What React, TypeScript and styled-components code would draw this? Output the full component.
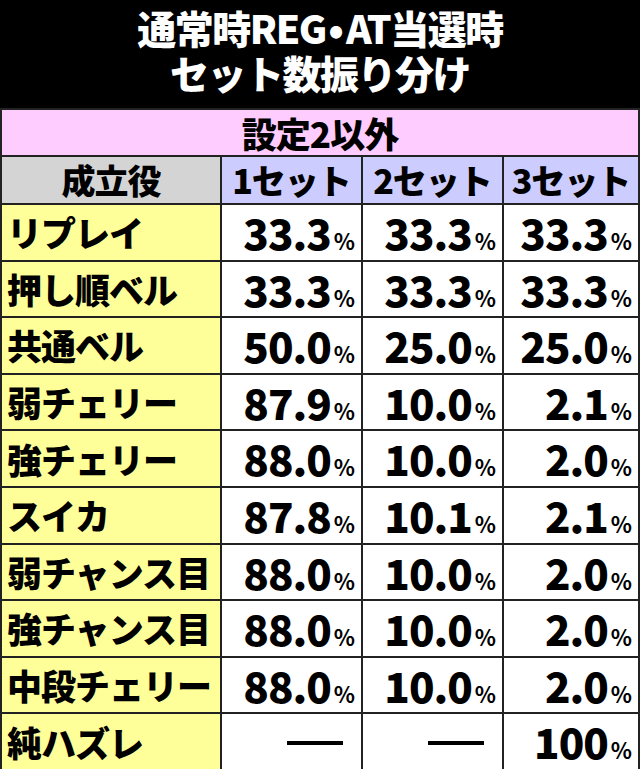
import React from "react";
import styled, { createGlobalStyle } from "styled-components";

const Global = createGlobalStyle`
  html, body { margin: 0; padding: 0; background: #000; }
  body { font-family: "Noto Sans CJK JP", "Noto Sans", sans-serif; }
`;

const Page = styled.div`
  width: 640px;
  height: 769px;
  display: flex;
  flex-direction: column;
  background: #000;
  overflow: hidden;
`;

const Title = styled.div`
  height: 108px;
  display: flex;
  flex-direction: column;
  align-items: center;
  justify-content: center;
  color: #fff;
  font-weight: 900;
  font-size: 39px;
  line-height: 45px;
  letter-spacing: -1.5px;
  padding-bottom: 8px;
  box-sizing: border-box;
`;

const Dot = styled.span`
  display: inline-block;
  width: 20px;
  text-align: center;
  letter-spacing: 0;
`;

const Grid = styled.div`
  flex: 1;
  display: grid;
  grid-template-columns: 218px 139px 139px 1fr;
  grid-template-rows: 45px 46px repeat(10, 1fr);
  gap: 2px;
  background: #222;
  border: 2px solid #222;
  border-bottom: none;
  box-sizing: border-box;
`;

const Cell = styled.div<{ $bg: string; $align?: "left" | "center" | "right" }>`
  background: ${(p) => p.$bg};
  display: flex;
  align-items: center;
  justify-content: ${(p) =>
    p.$align === "left" ? "flex-start" : p.$align === "right" ? "flex-end" : "center"};
  color: #000;
  font-weight: 900;
  line-height: 1.2;
  white-space: nowrap;
  min-width: 0;
`;

const Banner = styled(Cell)`
  grid-column: 1 / -1;
  font-size: 35px;
  letter-spacing: -1px;
`;

const Head = styled(Cell)`
  font-size: 34px;
  letter-spacing: -1px;
`;

const Label = styled(Cell)`
  font-size: 35px;
  letter-spacing: -1px;
  padding-left: 5px;
`;

const Value = styled(Cell)`
  font-family: "Noto Sans CJK JP", "Noto Sans", sans-serif;
  font-weight: 900;
  font-size: 42px;
  letter-spacing: -1px;
  padding-right: 6px;
  align-items: baseline;
  padding-top: 2px;
  box-sizing: border-box;
`;

const Pct = styled.span`
  font-size: 22px;
  font-weight: 700;
  margin-left: 3px;
  letter-spacing: 0;
`;

const Dash = styled.span`
  display: inline-block;
  align-self: center;
  width: 56px;
  height: 4px;
  background: #000;
  margin-right: 12px;
`;

const rows: [string, string, string, string][] = [
  ["リプレイ", "33.3", "33.3", "33.3"],
  ["押し順ベル", "33.3", "33.3", "33.3"],
  ["共通ベル", "50.0", "25.0", "25.0"],
  ["弱チェリー", "87.9", "10.0", "2.1"],
  ["強チェリー", "88.0", "10.0", "2.0"],
  ["スイカ", "87.8", "10.1", "2.1"],
  ["弱チャンス目", "88.0", "10.0", "2.0"],
  ["強チャンス目", "88.0", "10.0", "2.0"],
  ["中段チェリー", "88.0", "10.0", "2.0"],
  ["純ハズレ", "-", "-", "100"],
];

const YELLOW = "#ffff99";
const WHITE = "#ffffff";

function Val({ v }: { v: string }) {
  return (
    <Value $bg={WHITE} $align="right">
      {v === "-" ? (
        <Dash />
      ) : (
        <>
          {v}
          <Pct>%</Pct>
        </>
      )}
    </Value>
  );
}

export default function App() {
  return (
    <Page>
      <Global />
      <Title>
        <div>
          通常時REG<Dot>•</Dot>AT当選時
        </div>
        <div>セット数振り分け</div>
      </Title>
      <Grid>
        <Banner $bg="#ffccff">設定2以外</Banner>
        <Head $bg="#d4d4d4">成立役</Head>
        <Head $bg="#ccccff">1セット</Head>
        <Head $bg="#ccccff">2セット</Head>
        <Head $bg="#ccccff">3セット</Head>
        {rows.map((r) => (
          <React.Fragment key={r[0]}>
            <Label $bg={YELLOW} $align="left">
              {r[0]}
            </Label>
            <Val v={r[1]} />
            <Val v={r[2]} />
            <Val v={r[3]} />
          </React.Fragment>
        ))}
      </Grid>
    </Page>
  );
}
